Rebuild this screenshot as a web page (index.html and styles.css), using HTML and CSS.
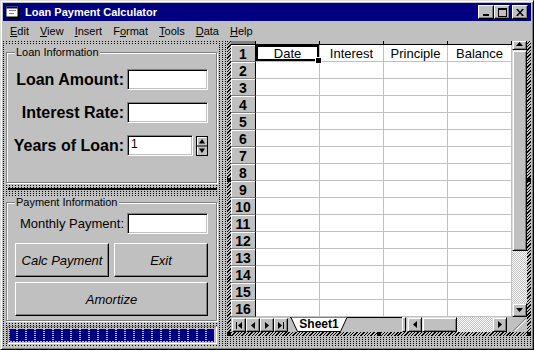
FILE: index.html
```html
<!doctype html>
<html lang="en">
<head>
	<meta charset="UTF-8">
	<title>Loan Payment Calculator</title>
	<link rel="stylesheet" href="styles.css">
</head>
<body>
	<div class="window">
		<div class="titlebar">
			<svg class="app-icon" width="16" height="16" viewBox="0 0 16 16">
				<rect x="1" y="2" width="12" height="11" fill="#fff" stroke="#000"/>
				<rect x="1.5" y="2.5" width="11" height="2" fill="#000080"/>
				<rect x="4" y="6" width="7" height="1" fill="#808080"/>
				<rect x="4" y="9" width="5" height="1" fill="#808080"/>
				<rect x="13" y="4" width="2" height="10" fill="#000"/>
				<rect x="3" y="13" width="12" height="2" fill="#000"/>
			</svg>
			<span class="title">Loan Payment Calculator</span>
			<div class="tb-btns">
				<span class="tb-btn"><svg width="8" height="7"><rect x="1" y="5" width="6" height="2" fill="#000"/></svg></span>
				<span class="tb-btn"><svg width="9" height="9"><rect x="0.5" y="0.5" width="8" height="8" fill="none" stroke="#000"/><rect x="0" y="0" width="9" height="2" fill="#000"/></svg></span>
				<span class="tb-btn close"><svg width="8" height="7"><path d="M0 0h2l2 2.5 2-2.5h2l-3 3.5 3 3.5h-2l-2-2.5-2 2.5h-2l3-3.5z" fill="#000"/></svg></span>
			</div>
		</div>
		<div class="menubar">
			<span><u>E</u>dit</span>
			<span><u>V</u>iew</span>
			<span><u>I</u>nsert</span>
			<span>F<u>o</u>rmat</span>
			<span><u>T</u>ools</span>
			<span><u>D</u>ata</span>
			<span><u>H</u>elp</span>
		</div>
		<div class="client">
			<div class="left dots">
				<div class="frame frame1">
					<div class="box box1">
						<span class="legend">Loan Information</span>
						<div class="fields">
							<label class="lbl-big">Loan Amount:</label>
							<div class="field"></div>
							<label class="lbl-big">Interest Rate:</label>
							<div class="field"></div>
							<label class="lbl-big">Years of Loan:</label>
							<div class="years">
								<div class="field small">1</div>
								<svg class="spin" width="12" height="20" viewBox="0 0 12 20">
									<rect x="0.5" y="0.5" width="11" height="19" fill="#c0c0c0" stroke="#000"/>
									<path d="M1.5 18.5v-17h9" fill="none" stroke="#fff"/>
									<rect x="1" y="9.5" width="10" height="1" fill="#000"/>
									<path d="M6 3 9 7.5H3z" fill="#000"/>
									<path d="M3 12.5h6L6 17z" fill="#000"/>
								</svg>
							</div>
						</div>
					</div>
				</div>
				<div class="hline"></div>
				<div class="frame frame2">
					<div class="box box2">
						<span class="legend">Payment Information</span>
						<div class="fields fields2">
							<label class="lbl">Monthly Payment:</label>
							<div class="field"></div>
						</div>
						<div class="btns">
							<button class="btn">Calc Payment</button>
							<button class="btn">Exit</button>
							<button class="btn wide">Amortize</button>
						</div>
					</div>
				</div>
				<div class="progress"><div class="progress-fill"></div></div>
			</div>
			<div class="right dots">
				<div class="sel">
					<div class="sheet">
						<div class="sheet-main">
							<div class="cells">
								<div class="corner"></div><div class="ch"></div><div class="ch"></div><div class="ch"></div><div class="ch"></div>
								<div class="rh">1</div><div class="active">Date</div><div>Interest</div><div>Principle</div><div>Balance</div>
								<div class="rh">2</div><div></div><div></div><div></div><div></div>
								<div class="rh">3</div><div></div><div></div><div></div><div></div>
								<div class="rh">4</div><div></div><div></div><div></div><div></div>
								<div class="rh">5</div><div></div><div></div><div></div><div></div>
								<div class="rh">6</div><div></div><div></div><div></div><div></div>
								<div class="rh">7</div><div></div><div></div><div></div><div></div>
								<div class="rh">8</div><div></div><div></div><div></div><div></div>
								<div class="rh">9</div><div></div><div></div><div></div><div></div>
								<div class="rh">10</div><div></div><div></div><div></div><div></div>
								<div class="rh">11</div><div></div><div></div><div></div><div></div>
								<div class="rh">12</div><div></div><div></div><div></div><div></div>
								<div class="rh">13</div><div></div><div></div><div></div><div></div>
								<div class="rh">14</div><div></div><div></div><div></div><div></div>
								<div class="rh">15</div><div></div><div></div><div></div><div></div>
								<div class="rh">16</div><div></div><div></div><div></div><div></div>
							</div>
							<div class="vscroll">
								<div class="sb-btn up"><svg width="7" height="4"><path d="M3.5 0 7 4H0z" fill="#000"/></svg></div>
								<div class="sb-thumb"></div>
								<div class="sb-track"></div>
								<div class="sb-btn down"><svg width="7" height="4"><path d="M0 0h7L3.5 4z" fill="#000"/></svg></div>
							</div>
						</div>
						<div class="tabbar">
							<div class="nav">
								<span class="nav-btn"><svg width="6" height="7"><rect x="0" y="0" width="1" height="7" fill="#000"/><path d="M6 0v7L2 3.5z" fill="#000"/></svg></span>
								<span class="nav-btn"><svg width="4" height="7"><path d="M4 0v7L0 3.5z" fill="#000"/></svg></span>
								<span class="nav-btn"><svg width="4" height="7"><path d="M0 0v7l4-3.5z" fill="#000"/></svg></span>
								<span class="nav-btn"><svg width="6" height="7"><path d="M0 0v7l4-3.5z" fill="#000"/><rect x="5" y="0" width="1" height="7" fill="#000"/></svg></span>
							</div>
							<div class="tab">
								<svg width="58" height="15" viewBox="0 0 58 15">
									<path d="M0 0.5H58" stroke="#000"/>
									<path d="M1 0.5 7.5 14.5H50.5L57 0.5" fill="#fff" stroke="#000"/>
								</svg>
								<span>Sheet1</span>
							</div>
							<div class="tab-rest"></div>
							<div class="split"></div>
							<div class="hscroll">
								<div class="sb-btn"><svg width="4" height="7"><path d="M4 0v7L0 3.5z" fill="#000"/></svg></div>
								<div class="sb-thumb h"></div>
								<div class="sb-track h"></div>
								<div class="sb-btn"><svg width="4" height="7"><path d="M0 0v7l4-3.5z" fill="#000"/></svg></div>
							</div>
							<div class="gap"></div>
							<div class="grip"><svg width="15" height="15"><path d="M1 14 14 1" stroke="#808080"/><path d="M3 14 14 3" stroke="#fff"/></svg></div>
						</div>
					</div>
					<span class="handle h-ml"></span>
					<span class="handle h-mr"></span>
					<span class="handle h-bl"></span>
					<span class="handle h-bm"></span>
					<span class="handle h-br"></span>
				</div>
			</div>
		</div>
	</div>
</body>
</html>
```
FILE: styles.css
```css
*{
	margin: 0;
	padding: 0;
	box-sizing: border-box;
}
body{
	background: #c0c0c0;
	font-family: "Liberation Sans", Arial, sans-serif;
	color: #000;
}
.window{
	width: 534px;
	height: 350px;
	border: 1px solid;
	border-color: #dfdfdf #000 #000 #dfdfdf;
	box-shadow: inset 1px 1px #fff, inset -1px -1px #808080;
	padding: 2px;
	display: flex;
	flex-direction: column;
	background: #c0c0c0;
}

/* title bar */
.titlebar{
	height: 18px;
	background: #000080;
	color: #fff;
	display: flex;
	align-items: center;
	padding: 0 3px 0 2px;
}
.app-icon{
	margin-right: 4px;
}
.title{
	font-weight: bold;
	font-size: 11px;
	flex: 1;
}
.tb-btns{
	display: flex;
}
.tb-btn{
	width: 16px;
	height: 14px;
	background: #c0c0c0;
	border: 1px solid;
	border-color: #fff #000 #000 #fff;
	box-shadow: inset -1px -1px #808080;
	display: flex;
	align-items: center;
	justify-content: center;
}
.tb-btn.close{
	margin-left: 2px;
}

/* menu */
.menubar{
	height: 20px;
	display: flex;
	align-items: center;
	gap: 11px;
	padding-left: 7px;
	font-size: 11px;
}
.menubar u{
	text-underline-offset: 1px;
}

.client{
	flex: 1;
	display: flex;
}
.dots{
	background-color: #c0c0c0;
	background-image: conic-gradient(from 270deg at 1px 1px, #000 25%, transparent 0);
	background-size: 3px 2px;
}

/* left side: frames */
.left{
	width: 224px;
	display: flex;
	flex-direction: column;
}
.frame{
	background: #c0c0c0;
	margin-left: 2px;
	width: 214px;
	padding: 8px 0 0 1px;
}
.frame1{
	margin-top: 3px;
	height: 141px;
}
.frame2{
	margin-top: 6px;
	height: 126px;
	padding-top: 6px;
}
.box{
	position: relative;
	width: 211px;
	border: 1px solid #808080;
	box-shadow: inset 1px 1px #fff, 1px 1px #fff;
}
.box1{
	height: 131px;
}
.box2{
	height: 119px;
}
.legend{
	position: absolute;
	top: -7px;
	left: 8px;
	padding: 0 1px;
	background: #c0c0c0;
	font-size: 11px;
	line-height: 13px;
}
.fields{
	display: grid;
	grid-template-columns: 117px 81px;
	grid-auto-rows: 21px;
	column-gap: 3px;
	row-gap: 12px;
	padding-top: 16px;
}
.fields2{
	padding-top: 10px;
}
.lbl-big{
	font-weight: bold;
	font-size: 16px;
	text-align: right;
	align-self: center;
}
.lbl{
	font-size: 13px;
	text-align: right;
	align-self: center;
}
.field{
	background: #fff;
	border: 1px solid;
	border-color: #808080 #fff #fff #808080;
	box-shadow: inset 1px 1px #000, inset -1px -1px #c0c0c0;
	font-size: 12px;
	line-height: 17px;
	padding-left: 3px;
}
.years{
	display: flex;
	gap: 3px;
}
.field.small{
	width: 66px;
}
.spin{
	margin-top: 1px;
}
.btns{
	display: grid;
	grid-template-columns: 94px 94px;
	grid-auto-rows: 34px;
	gap: 5px;
	margin: 9px 0 0 8px;
}
.btn{
	background: #c0c0c0;
	border: 1px solid;
	border-color: #fff #000 #000 #fff;
	box-shadow: inset -1px -1px #808080;
	font-family: "Liberation Sans", Arial, sans-serif;
	font-style: italic;
	font-size: 13px;
	color: #000;
}
.btn.wide{
	grid-column: span 2;
}
.hline{
	margin: 3px 0 0 5px;
	width: 209px;
	height: 2px;
	background: #000;
}
.progress{
	margin: 4px 0 0 4px;
	width: 210px;
	height: 18px;
	border: 1px solid;
	border-color: #808080 #fff #fff #808080;
	padding: 2px;
}
.progress-fill{
	height: 100%;
	background:
		repeating-linear-gradient(0deg, #000080 0 1px, transparent 1px 2px),
		repeating-linear-gradient(90deg, #000080 0 6px, #c0c0c0 6px 8px, #000080 8px 9px);
}

/* right side: spreadsheet */
.right{
	flex: 1;
}
.sel{
	position: relative;
	height: 295px;
	padding: 0 4px 4px;
	background: repeating-linear-gradient(135deg, #000 0 1px, #c0c0c0 1px 2.4px);
}
.handle{
	position: absolute;
	width: 4px;
	height: 4px;
	background: #000;
}
.h-ml{ left: 0; top: 137px; }
.h-mr{ right: 0; top: 137px; }
.h-bl{ left: 0; bottom: 0; }
.h-bm{ left: 150px; bottom: 0; }
.h-br{ right: 0; bottom: 0; }

.sheet{
	height: 291px;
	background: #c0c0c0;
	display: flex;
	flex-direction: column;
}
.sheet-main{
	display: flex;
	height: 276px;
}
.cells{
	display: grid;
	grid-template-columns: 25px repeat(4, 64px);
	grid-template-rows: 4px;
	grid-auto-rows: 17px;
	background: #fff;
}
.cells div{
	border-right: 1px solid #c0c0c0;
	border-bottom: 1px solid #c0c0c0;
	font-size: 13px;
	line-height: 16px;
	padding-top: 1px;
	text-align: center;
}
.cells .corner{
	background: #808080;
	border-right: 1px solid #000;
	border-bottom: 1px solid #000;
	padding: 0;
}
.cells .ch{
	background: #c0c0c0;
	border-right: 1px solid #000;
	border-bottom: 1px solid #000;
	padding: 0;
}
.cells .rh{
	background: #c0c0c0;
	border-right: 1px solid #000;
	border-bottom: 1px solid #808080;
	box-shadow: inset 0 1px #fff, inset 1px 0 #fff;
	font-weight: bold;
	font-size: 14px;
}
.cells .active{
	position: relative;
	box-shadow: inset 0 0 0 2px #000;
}
.cells .active::after{
	content: "";
	position: absolute;
	right: -3px;
	bottom: -3px;
	width: 5px;
	height: 5px;
	background: #000;
	border: 1px solid #fff;
}
.vscroll{
	width: 15px;
	display: flex;
	flex-direction: column;
}
.sb-btn{
	width: 15px;
	height: 15px;
	background: #c0c0c0;
	border: 1px solid;
	border-color: #dfdfdf #000 #000 #dfdfdf;
	box-shadow: inset 1px 1px #fff, inset -1px -1px #808080;
	display: flex;
	align-items: center;
	justify-content: center;
}
.sb-btn.up{
	height: 9px;
	border-top: 0;
	align-items: flex-start;
	padding-top: 1px;
}
.sb-btn.down{
	height: 14px;
}
.sb-thumb{
	height: 201px;
	background: #c0c0c0;
	border: 1px solid;
	border-color: #dfdfdf #000 #000 #dfdfdf;
	box-shadow: inset 1px 1px #fff, inset -1px -1px #808080;
}
.sb-track{
	height: 52px;
	background-color: #fff;
	background-image: conic-gradient(#c0c0c0 25%, #fff 0 50%, #c0c0c0 0 75%, #fff 0);
	background-size: 2px 2px;
}
.tabbar{
	height: 15px;
	display: flex;
}
.nav{
	display: flex;
	padding: 1px 0 0 1px;
	width: 59px;
}
.nav-btn{
	width: 14px;
	height: 14px;
	background: #c0c0c0;
	border: 1px solid;
	border-color: #fff #000 #000 #fff;
	box-shadow: inset -1px -1px #808080;
	display: flex;
	align-items: center;
	justify-content: center;
}
.tab{
	position: relative;
	width: 58px;
	display: flex;
	justify-content: center;
}
.tab svg{
	position: absolute;
	left: 0;
	top: 0;
}
.tab span{
	position: relative;
	font-weight: bold;
	font-size: 12px;
	line-height: 15px;
}
.tab-rest{
	width: 54px;
	border-top: 1px solid #000;
}
.split{
	width: 4px;
	background: #c0c0c0;
	border: 1px solid;
	border-color: #fff #000 #000 #fff;
}
.hscroll{
	display: flex;
	margin-left: 1px;
}
.sb-thumb.h{
	width: 35px;
	height: 15px;
}
.sb-track.h{
	width: 35px;
	height: 15px;
}
.gap{
	width: 5px;
}
.grip{
	width: 15px;
	height: 15px;
	background: #c0c0c0;
}
```
